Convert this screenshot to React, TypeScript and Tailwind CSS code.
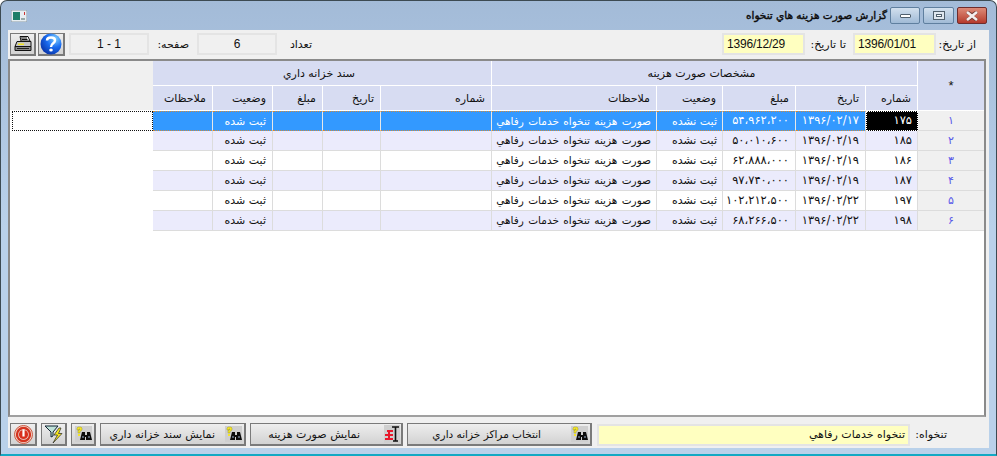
import React from "react";

const arabic = "font-['DejaVu_Sans',sans-serif]";
const latin = "font-['Liberation_Sans',sans-serif]";
const cols = "grid grid-cols-[143px_60px_60px_50px_58px_111px_165px_66px_73px_70px_52px_66px]";

const rows = [
  ["۱۷۵", "۱۳۹۶/۰۲/۱۷", "۵۴،۹۶۲،۲۰۰", "۱"],
  ["۱۸۵", "۱۳۹۶/۰۲/۱۹", "۵۰،۰۱۰،۶۰۰", "۲"],
  ["۱۸۶", "۱۳۹۶/۰۲/۱۹", "۶۲،۸۸۸،۰۰۰", "۳"],
  ["۱۸۷", "۱۳۹۶/۰۲/۱۹", "۹۷،۷۴۰،۰۰۰", "۴"],
  ["۱۹۷", "۱۳۹۶/۰۲/۲۲", "۱۰۲،۲۱۲،۵۰۰", "۵"],
  ["۱۹۸", "۱۳۹۶/۰۲/۲۲", "۶۸،۲۶۶،۵۰۰", "۶"],
];

function Binoculars() {
  return (
    <svg width="17" height="16" viewBox="0 0 17 16">
      <rect width="17" height="16" fill="#cfcfcf" />
      <path d="M2 4V2l1-1h3l1 1v2L5 5.500V7H3V4.500L5 3.500V3H4v1z" fill="#f5e62a" stroke="#8a8a20" strokeWidth="0.4" />
      <rect x="3" y="8" width="2" height="2" fill="#f5e62a" />
      <path d="M7 6h3v3h2V6h3l2 8h-6v-3h-1v3H5z" fill="#0c0c0c" />
      <rect x="7" y="10" width="2" height="2" fill="#55606e" />
      <rect x="13" y="10" width="2" height="2" fill="#55606e" />
    </svg>
  );
}

function Printer() {
  return (
    <svg width="18" height="16" viewBox="0 0 18 16">
      <path d="M6 .5h8l2 4.500H7z" fill="#f4f4f4" stroke="#111" />
      <path d="M7 2h6M7.500 3.500h6" stroke="#111" />
      <path d="M3 5.500h14v5H1z" fill="#c4c4c4" stroke="#111" />
      <path d="M1 10.500h16v4H1z" fill="#8a8a8a" stroke="#111" />
      <rect x="4" y="7.500" width="6" height="1.500" fill="#f2e424" />
      <rect x="3" y="12" width="12" height="1" fill="#222" />
    </svg>
  );
}

function Help() {
  return (
    <svg width="22" height="22" viewBox="0 0 22 22">
      <defs>
        <radialGradient id="globe" cx="0.7" cy="0.25" r="0.9">
          <stop offset="0" stopColor="#7fd0ff" />
          <stop offset="0.45" stopColor="#1a6cf0" />
          <stop offset="1" stopColor="#062a9c" />
        </radialGradient>
      </defs>
      <circle cx="11" cy="11" r="10.500" fill="url(#globe)" />
      <path d="M7 7.500C7 3.500 15 3.500 15 7.500c0 3-4 2.500-4 6.500" fill="none" stroke="#fff" strokeWidth="2.400" />
      <ellipse cx="11" cy="17" rx="1.800" ry="1.500" fill="#fff" />
    </svg>
  );
}

function Power() {
  return (
    <svg width="19" height="19" viewBox="0 0 19 19">
      <circle cx="9.500" cy="9.500" r="9" fill="#f6d9cf" stroke="#c9573f" />
      <circle cx="9.500" cy="9.500" r="6.500" fill="#e8e0dc" stroke="#d4341f" strokeWidth="2.400" />
      <circle cx="9.500" cy="9.500" r="4.600" fill="#d9301e" />
      <rect x="8.400" y="4.500" width="2.200" height="7" fill="#fff" />
    </svg>
  );
}

function Filter() {
  return (
    <svg width="20" height="19" viewBox="0 0 20 19">
      <path d="M1 1h13L9 7v4L7 12V7z" fill="#bfe2d8" stroke="#123" />
      <path d="M15 3l-5 7h3.500L9 18l9-9.500h-3.500L17 3z" fill="#f7e81e" stroke="#222" strokeWidth="0.7" />
    </svg>
  );
}

function Tools() {
  return (
    <svg width="16" height="18" viewBox="0 0 16 18">
      <rect width="16" height="18" fill="#cfcfcf" />
      <path d="M8 2h7M11.500 2v14M9 16h5" stroke="#111" strokeWidth="1.600" fill="none" />
      <path d="M3 5h6v2H6v2h3v2H6v2h3v2H1v-2h3v-2H1V9h3V7H3z" fill="#e8192c" />
    </svg>
  );
}

function WinButton({ className, children }: { className: string; children: React.ReactNode }) {
  return (
    <div className={`flex h-[17px] items-center justify-center rounded-[2px] border border-[#5f7f9f] ${className}`}>
      {children}
    </div>
  );
}

function ToolButton({ className, children }: { className: string; children: React.ReactNode }) {
  return (
    <button className={`flex h-[23px] items-center border border-[#7a7a7a] border-b-2 border-r-2 bg-gradient-to-b from-[#eeeeee] to-[#d2d2d2] ${className}`}>
      {children}
    </button>
  );
}

function Head({ children, className = "" }: { children?: React.ReactNode; className?: string }) {
  return (
    <div dir="rtl" className={`flex h-[25px] items-center border-b border-r border-[#fff] bg-[#d7dcf2] pr-[6px] text-[#111] ${className}`}>
      {children}
    </div>
  );
}

function Cell({ children, className = "" }: { children?: React.ReactNode; className?: string }) {
  return (
    <div dir="rtl" className={`flex h-[20px] items-center border-b border-r pr-[4px] ${className}`}>
      {children}
    </div>
  );
}

export default function App() {
  return (
    <div className={`flex h-[456px] w-[997px] flex-col overflow-hidden rounded-t-[7px] border border-b-2 border-[#3c4a52] border-b-[#12a9c4] bg-gradient-to-b from-[#a3bbd8] via-[#b9d1ea] to-[#b9d1ea] text-[11px] leading-none text-[#111] ${arabic}`}>
      {/* Title bar */}
      <div className="flex h-[29px] shrink-0 items-center pl-[10px] pr-[9px]">
        <svg width="16" height="12" viewBox="0 0 16 12">
          <rect width="16" height="12" fill="#e8eef2" stroke="#8a9aa5" />
          <rect x="2" y="2" width="7" height="8" fill="#1e7f68" />
          <rect x="10" y="8" width="4" height="2" fill="#9aa" />
          <rect x="13" y="2" width="1" height="3" fill="#c33" />
        </svg>
        <div dir="rtl" className="ml-auto mr-[3px] whitespace-nowrap text-[10.500px] text-[#0c0c0c] [-webkit-text-stroke:0.4px_#0c0c0c]">گزارش صورت هزينه هاي تنخواه</div>
        <WinButton className="w-[30px] bg-gradient-to-b from-[#d2e0ee] to-[#a0bad6]">
          <div className="h-[4px] w-[11px] rounded-[1px] border border-[#50606e] bg-white" />
        </WinButton>
        <WinButton className="ml-[3px] w-[31px] bg-gradient-to-b from-[#d2e0ee] to-[#a0bad6]">
          <div className="flex h-[9px] w-[12px] items-center justify-center border border-[#50606e] bg-[#dfe7ef]">
            <div className="h-[3px] w-[6px] border border-[#50606e] bg-white" />
          </div>
        </WinButton>
        <WinButton className="ml-[3px] w-[30px] border-[#6f2c2c] bg-gradient-to-b from-[#dd8a78] to-[#b5392c]">
          <svg width="14" height="10" viewBox="0 0 14 10">
            <path d="M2 1l5 3 5-3M2 9l5-3 5 3M7 5" fill="none" stroke="#6f3a34" strokeWidth="3.600" />
            <path d="M2 1l10 8M12 1L2 9" fill="none" stroke="#f4eeee" strokeWidth="2.600" />
          </svg>
        </WinButton>
      </div>

      {/* Toolbar */}
      <div className="mx-[7px] flex h-[28px] shrink-0 items-center bg-[#f0f0f0] pl-[2px] pr-[13px]">
        <ToolButton className="w-[26px] justify-center"><Printer /></ToolButton>
        <ToolButton className="ml-[2px] w-[27px] justify-center"><Help /></ToolButton>
        <div className={`ml-[4px] flex h-[22px] w-[80px] items-center justify-center border-2 border-[#e4e4e4] bg-[#f0f0f0] text-[12px] ${latin}`}>1 - 1</div>
        <div dir="rtl" className="ml-[7px] w-[33px] whitespace-nowrap">صفحه:</div>
        <div className={`ml-[8px] flex h-[22px] w-[80px] items-center justify-center border-2 border-[#e4e4e4] bg-[#f0f0f0] text-[12px] ${latin}`}>6</div>
        <div dir="rtl" className="ml-[10px] w-[25px] whitespace-nowrap">تعداد</div>
        <div className={`ml-auto flex h-[22px] w-[83px] items-center border-2 border-[#e4e4e4] bg-[#ffffc0] pl-[3px] text-[12px] tracking-[-0.2px] ${latin}`}>1396/12/29</div>
        <div dir="rtl" className="ml-[6px] w-[35px] whitespace-nowrap">تا تاريخ:</div>
        <div className={`ml-[7px] flex h-[22px] w-[83px] items-center border-2 border-[#e4e4e4] bg-[#ffffc0] pl-[3px] text-[12px] tracking-[-0.2px] ${latin}`}>1396/01/01</div>
        <div dir="rtl" className="ml-[5px] w-[35px] whitespace-nowrap">از تاريخ:</div>
      </div>

      {/* Grid */}
      <div className="mx-[7px] flex-1 bg-[#f0f0f0] pr-[3px] pt-[1px]">
        <div className="h-[358px] border-2 border-[#8a8a8a] border-b-[#a0a0a0] bg-white">
          <div className={cols}>
            <div className="row-span-2 h-[49px] bg-[#f0f0f0]" />
            <Head className="col-span-5 h-[24px] justify-center pr-0">سند خزانه داري</Head>
            <Head className="col-span-5 h-[24px] justify-center pr-0">مشخصات صورت هزينه</Head>
            <div className={`row-span-2 flex h-[49px] items-center justify-center bg-[#d7dcf2] text-[13px] ${latin}`}>*</div>
            {["ملاحظات", "وضعيت", "مبلغ", "تاريخ", "شماره", "ملاحظات", "وضعيت", "مبلغ", "تاريخ", "شماره"].map((h, i) => (
              <Head key={i}>{h}</Head>
            ))}
            {rows.map((r, i) => {
              const sel = i === 0;
              const bg = sel
                ? "bg-[#3399ff] text-white border-t border-r-[#e8e8e8] border-t-[#d08a3a] border-b-[#d08a3a] [border-top-style:dotted] [border-bottom-style:dotted]"
                : i % 2 === 1
                  ? "bg-[#ebebfc] border-[#dcdcdc]"
                  : "bg-white border-[#dcdcdc]";
              return (
                <React.Fragment key={i}>
                  {sel ? (
                    <div className="ml-[2px] h-[20px] border border-dotted border-[#111] bg-white" />
                  ) : (
                    <div className="h-[20px]" />
                  )}
                  <Cell className={bg} />
                  <Cell className={`${bg} pr-[6px]`}>ثبت شده</Cell>
                  <Cell className={bg} />
                  <Cell className={bg} />
                  <Cell className={bg} />
                  <Cell className={`${bg} pr-[5px] text-[10.500px] [word-spacing:1px]`}>صورت هزينه تنخواه خدمات رفاهي</Cell>
                  <Cell className={`${bg} pr-[5px]`}>ثبت نشده</Cell>
                  <Cell className={`${bg} pr-[6px] text-[11.500px]`}>{r[2]}</Cell>
                  <Cell className={`${bg} pr-[6px] text-[11.500px]`}>{r[1]}</Cell>
                  <Cell className={sel ? "border border-dotted border-white bg-black pr-[5px] text-[11.500px] text-white" : `${bg} pr-[5px] text-[11.500px]`}>{r[0]}</Cell>
                  <div className="flex h-[20px] items-center justify-center border-b border-[#dcdcdc] bg-[#f0f0f0] text-[#5a5ae8]">{r[3]}</div>
                </React.Fragment>
              );
            })}
          </div>
        </div>
      </div>

      {/* Bottom bar */}
      <div className="mx-[7px] mb-[6px] flex h-[27px] shrink-0 items-center bg-[#f0f0f0] pl-[2px] pr-[42px]">
        <ToolButton className="w-[27px] justify-center"><Power /></ToolButton>
        <ToolButton className="ml-[4px] w-[26px] justify-center"><Filter /></ToolButton>
        <ToolButton className="ml-[4px] w-[25px] justify-center"><Binoculars /></ToolButton>
        <ToolButton className="ml-[4px] w-[146px] justify-end gap-[10px] pr-[2px]"><span dir="rtl">نمايش سند خزانه داري</span><Binoculars /></ToolButton>
        <ToolButton className="ml-[4px] w-[153px] justify-end gap-[24px] pr-[1px]"><span dir="rtl">نمايش صورت هزينه</span><Tools /></ToolButton>
        <ToolButton className="ml-[4px] w-[185px] justify-end gap-[30px] pr-[2px]"><span dir="rtl" className="text-[10.500px]">انتخاب مراكز خزانه داري</span><Binoculars /></ToolButton>
        <div dir="rtl" className="ml-[5px] flex h-[22px] w-[313px] items-center border-2 border-[#e4e4e4] bg-[#ffffc0] pr-[3px]">تنخواه خدمات رفاهي</div>
        <div dir="rtl" className="ml-auto whitespace-nowrap">تنخواه:</div>
      </div>
    </div>
  );
}
